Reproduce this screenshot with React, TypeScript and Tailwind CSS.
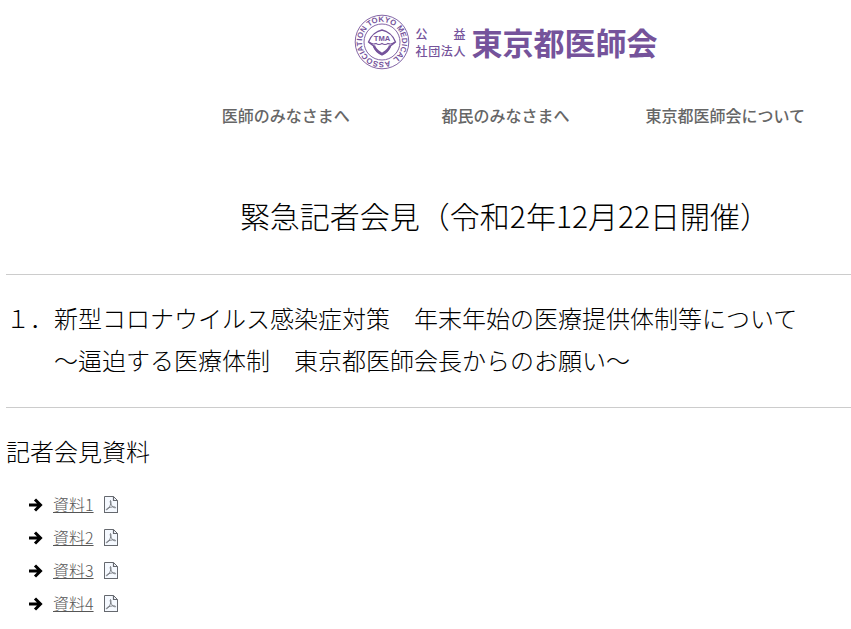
const navItems = ['医師のみなさまへ', '都民のみなさまへ', '東京都医師会について'];
const documents = ['資料1', '資料2', '資料3', '資料4'];

function Seal() {
  return (
    <svg viewBox="0 0 56 56" className="size-14 shrink-0 text-[#75539b]" fill="none" stroke="currentColor" aria-hidden="true">
      <defs>
        <path id="ring" d="M28 48A20 20 0 0 1 28 8A20 20 0 0 1 28 48" transform="rotate(-22 28 28)" />
      </defs>
      <circle cx="28" cy="28" r="26.8" strokeWidth="0.9" />
      <circle cx="28" cy="28" r="18" strokeWidth="0.9" />
      <text fill="currentColor" stroke="none" fontSize="7.8" fontWeight="700" className="font-['Liberation_Sans',sans-serif]">
        <textPath href="#ring" startOffset="0">ASSOCIATION TOKYO MEDICAL</textPath>
      </text>
      <path d="M14.5 28C17 21 23 17 28 16C33 17 39 21 41.500 28L36.500 32C35 37 32 39 28 41C24 39 21 37 19.500 32Z" strokeWidth="1.300" />
      <path d="M15 28Q18 31 22 29.500Q25 31.500 28 29.500Q31 31.500 34 29.500Q38 31 41 28" strokeWidth="1.200" />
      <path d="M20 31.500C21 36 25 38 28 40C31 38 35 36 36 31.500" strokeWidth="2.200" />
      <text x="28" y="27" textAnchor="middle" fill="currentColor" stroke="none" fontSize="7.6" fontWeight="700" className="font-['Liberation_Sans',sans-serif]">TMA</text>
    </svg>
  );
}

function Arrow() {
  return (
    <svg viewBox="0 0 14 14" className="size-3.5 shrink-0" fill="none" stroke="#000" strokeWidth="3" aria-hidden="true">
      <path d="M0 7H11.500M6 1.500L11.500 7L6 12.500" />
    </svg>
  );
}

function PdfIcon() {
  return (
    <svg viewBox="0 0 14 18" className="h-[18px] w-3.5 shrink-0" fill="none" stroke="#65686e" aria-hidden="true">
      <path d="M.5 .5V16.500H13.500V4.500L9.500 .5Z" fill="#f5f9ff" />
      <path d="M9.500 .5V4.500H13.500M0 16.500H14" strokeWidth="1.200" />
      <path d="M6.500 4.500C6 5 6.300 6.700 6.700 7.700C6.300 9.700 4.900 12.200 3.200 13.700C2.700 14.200 2 13.600 2.500 13C4 11.600 8 10.600 10.800 10.900C12.100 11.200 11.800 12.200 10.700 11.800C8.900 11.300 7.500 9.700 6.900 7.900C7.100 6.400 7 5 6.500 4.500Z" strokeWidth=".8" />
    </svg>
  );
}

export default function App() {
  return (
    <div className="overflow-hidden bg-white pb-2 font-['Noto_Sans_CJK_JP','Liberation_Sans',sans-serif] text-black">
      <header className="pt-3.5 pl-40">
        <a href="#" className="mx-auto flex w-fit items-center text-[#75539b]" aria-label="公益社団法人東京都医師会">
          <Seal />
          <span className="mx-1.5 block w-[50px] text-[12px] leading-[17px] font-medium">
            <span className="flex justify-between"><span>公</span><span>益</span></span>
            <span className="flex justify-between"><span>社</span><span>団</span><span>法</span><span>人</span></span>
          </span>
          <span className="text-[31px] leading-10 font-bold whitespace-nowrap">東京都医師会</span>
        </a>
        <nav className="mt-[31px] grid grid-cols-3 px-4 text-center text-[16px] leading-7 font-medium text-[#666]">
          {navItems.map((item) => (
            <a key={item} href="#" className="whitespace-nowrap">{item}</a>
          ))}
        </nav>
      </header>
      <main className="pl-1.5 font-light">
        <h1 className="mt-[66px] pl-[153px] text-center text-[30px] leading-[40px] whitespace-nowrap">緊急記者会見（令和2年12月22日開催）</h1>
        <h2 className="mt-[39px] flex border-y border-[#ccc] pt-[22px] pb-[26px] text-[24px] leading-[42px]">
          <span className="w-12 shrink-0 whitespace-nowrap">１．</span>
          <span className="whitespace-nowrap">
            新型コロナウイルス感染症対策　年末年始の医療提供体制等について<br />
            ～逼迫する医療体制　東京都医師会長からのお願い～
          </span>
        </h2>
        <h3 className="mt-[22px] text-[24px] leading-[42px]">記者会見資料</h3>
        <ul className="mt-4 pl-[23px] text-[16px] leading-[33px] text-[#555]">
          {documents.map((name) => (
            <li key={name} className="flex items-center">
              <Arrow />
              <a href="#" className="ml-2.5 flex items-center gap-2.5"><span className="underline">{name}</span><PdfIcon /></a>
            </li>
          ))}
        </ul>
      </main>
    </div>
  );
}
